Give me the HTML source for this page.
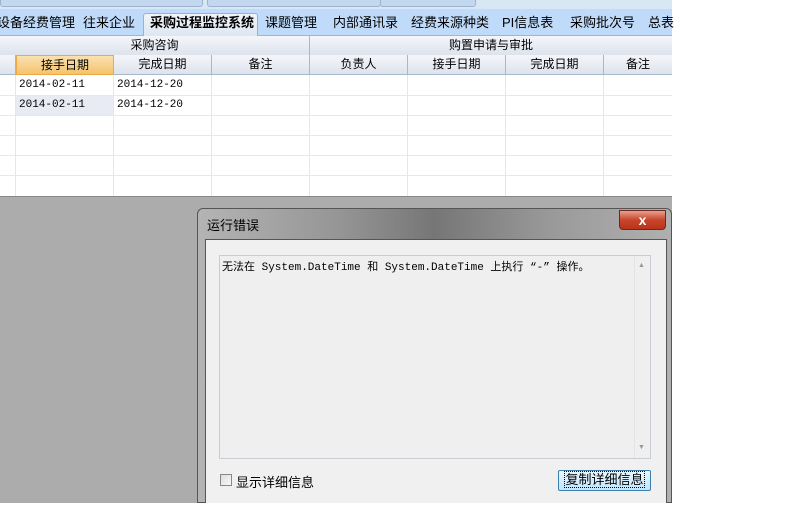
<!DOCTYPE html>
<html><head><meta charset="utf-8"><style>
*{margin:0;padding:0;box-sizing:border-box}
body{width:800px;height:527px;background:#fff;position:relative;overflow:hidden;font-family:"Liberation Sans","Noto Sans CJK SC","WenQuanYi Zen Hei",sans-serif;font-size:12px;color:#000}
.a{position:absolute}
.mono{font-family:"Liberation Mono","Noto Sans CJK SC",monospace;font-size:11px}
.tab{position:absolute;top:13px;height:22px;line-height:20px;font-size:13px;white-space:nowrap}
.hd{position:absolute;height:20px;line-height:19px;text-align:center;background:linear-gradient(#f4f6fa,#dde3ec);border-right:1px solid #a8b8cc;border-bottom:1px solid #a8b8cc;font-size:12px}
.vl{position:absolute;top:75px;width:1px;height:121px;background:#e6e6e6}
.hl{position:absolute;left:0;width:672px;height:1px;background:#e8e8e8}
</style></head><body>
<div class="a" style="left:0;top:0;width:672px;height:9px;background:#d9e7f5"></div>
<div class="a" style="left:0;top:-6px;width:203px;height:13px;background:#c3d8ef;border:1px solid #9ab3d0;border-radius:3px"></div>
<div class="a" style="left:207px;top:-6px;width:174px;height:13px;background:#c3d8ef;border:1px solid #9ab3d0;border-radius:3px"></div>
<div class="a" style="left:380px;top:-6px;width:96px;height:13px;background:#c3d8ef;border:1px solid #9ab3d0;border-radius:3px"></div>
<div class="a" style="left:0;top:9px;width:672px;height:27px;background:#c0dbf9;border-bottom:1px solid #9fb6d3"></div>
<div class="a" style="left:143px;top:13px;width:115px;height:24px;background:linear-gradient(#f0f4fa,#dde6f0);border:1px solid #9ab0cc;border-bottom:none;border-radius:3px 3px 0 0"></div>
<div class="tab" style="left:-3px">设备经费管理</div>
<div class="tab" style="left:83px">往来企业</div>
<div class="tab" style="left:150px;font-weight:bold">采购过程监控系统</div>
<div class="tab" style="left:265px">课题管理</div>
<div class="tab" style="left:333px">内部通讯录</div>
<div class="tab" style="left:411px">经费来源种类</div>
<div class="tab" style="left:502px">PI信息表</div>
<div class="tab" style="left:570px">采购批次号</div>
<div class="tab" style="left:648px">总表</div>
<div class="hd" style="left:0;top:36px;width:310px">采购咨询</div>
<div class="hd" style="left:310px;top:36px;width:362px;border-right:none">购置申请与审批</div>
<div class="hd" style="left:0;top:55px;width:16px"></div>
<div class="hd" style="left:16px;top:55px;width:98px;background:linear-gradient(#fbe0b0,#f4c46e);border:1px solid #f0a840">接手日期</div>
<div class="hd" style="left:114px;top:55px;width:98px">完成日期</div>
<div class="hd" style="left:212px;top:55px;width:98px">备注</div>
<div class="hd" style="left:310px;top:55px;width:98px">负责人</div>
<div class="hd" style="left:408px;top:55px;width:98px">接手日期</div>
<div class="hd" style="left:506px;top:55px;width:98px">完成日期</div>
<div class="hd" style="left:604px;top:55px;width:68px;border-right:none">备注</div>
<div class="a" style="left:16px;top:96px;width:97px;height:19px;background:#e8eaf4"></div>
<div class="vl" style="left:15px"></div><div class="vl" style="left:113px"></div><div class="vl" style="left:211px"></div><div class="vl" style="left:309px"></div><div class="vl" style="left:407px"></div><div class="vl" style="left:505px"></div><div class="vl" style="left:603px"></div>
<div class="hl" style="top:95px"></div><div class="hl" style="top:115px"></div><div class="hl" style="top:135px"></div><div class="hl" style="top:155px"></div><div class="hl" style="top:175px"></div>
<div class="a mono" style="left:19px;top:79px">2014-02-11</div>
<div class="a mono" style="left:117px;top:79px">2014-12-20</div>
<div class="a mono" style="left:19px;top:99px">2014-02-11</div>
<div class="a mono" style="left:117px;top:99px">2014-12-20</div>
<div class="a" style="left:0;top:196px;width:672px;height:307px;background:#acacac;border-top:1px solid #888"></div>
<div class="a" style="left:197px;top:208px;width:475px;height:295px;border:1px solid #555;border-radius:6px 6px 0 0;background:linear-gradient(90deg,#b4b4b4 0%,#959595 30%,#767676 50%,#9a9a9a 75%,#b0b0b0 100%)"></div>
<div class="a" style="left:207px;top:215px;font-size:13px">运行错误</div>
<div class="a" style="left:619px;top:210px;width:47px;height:20px;border:1px solid #6a2a20;border-radius:0 0 4px 4px;background:linear-gradient(#e8a090,#c8452c 50%,#b83418);color:#fff;text-align:center;font-weight:bold;font-size:14px;line-height:18px">x</div>
<div class="a" style="left:205px;top:239px;width:462px;height:264px;background:#f0f0f0;border:1px solid #555;border-bottom:none"></div>
<div class="a" style="left:219px;top:255px;width:432px;height:204px;background:#efefef;border:1px solid #c8ccd4"></div>
<div class="a" style="left:634px;top:256px;width:16px;height:202px;border-left:1px solid #e4e4e4"></div>
<div class="a" style="left:638px;top:262px;font-size:7px;color:#999">▲</div>
<div class="a" style="left:638px;top:444px;font-size:7px;color:#999">▼</div>
<div class="a mono" style="left:222px;top:258px;font-size:11px">无法在 System.DateTime 和 System.DateTime 上执行 “-” 操作。</div>
<div class="a" style="left:220px;top:474px;width:12px;height:12px;border:1px solid #888;background:linear-gradient(135deg,#ddd,#f8f8f8)"></div>
<div class="a" style="left:236px;top:472px;font-size:13px">显示详细信息</div>
<div class="a" style="left:558px;top:470px;width:93px;height:21px;border:1px solid #3c7fb1;border-radius:2px;background:linear-gradient(#eaf6fd,#bee6fd);text-align:center;line-height:18px;font-size:13px"><span style="outline:1px dotted #000">复制详细信息</span></div>
</body></html>
